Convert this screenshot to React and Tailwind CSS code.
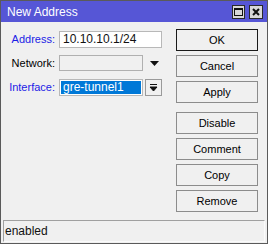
const font = { fontFamily: '"Liberation Sans", Arial, sans-serif' };

const Btn = ({ label, primary }) => (
  <button
    className={`h-[22px] w-full text-[11px] text-[#000] bg-[#f0f0f0] border ${
      primary ? 'border-[#1a1a1a]' : 'border-[#8c8c8c]'
    }`}
  >
    {label}
  </button>
);

const Row = ({ label, blue, children }) => (
  <div className="flex items-center h-[18px]">
    <span className={`w-[54px] pr-[1px] text-right text-[11px] ${blue ? 'text-[#1c1ce6]' : 'text-[#000]'}`}>
      {label}
    </span>
    <div className="ml-[3px] flex items-center gap-[2px]">{children}</div>
  </div>
);

export default function App() {
  return (
    <div className="w-[268px] h-[244px] border border-[#5a5a5a] bg-[#f0f0f0] flex flex-col" style={font}>
      <div className="h-[21px] bg-[#5656d6] flex items-center pl-[6px] pr-[4px] shrink-0">
        <span className="text-white text-[12px]">New Address</span>
        <div className="ml-auto flex gap-[4px]">
          <div className="w-[13px] h-[14px] bg-[#d8d8d8] border border-[#2a2a2a] flex items-center justify-center">
            <div className="w-[9px] h-[8px] border border-[#111] border-t-2" />
          </div>
          <div className="w-[14px] h-[14px] bg-[#d8d8d8] border border-[#2a2a2a] flex items-center justify-center">
            <svg width="8" height="8" viewBox="0 0 8 8">
              <path d="M1 1L7 7M7 1L1 7" stroke="#111" strokeWidth="2" />
            </svg>
          </div>
        </div>
      </div>

      <div className="flex flex-1 pl-[1px] pr-[9px] pt-[7px]">
        <div className="flex-1 flex flex-col gap-[6px] pt-[1px]">
          <Row label="Address:" blue>
            <div className="w-[103px] h-[17px] bg-white border border-[#b8b8b8] flex items-center px-[3px] text-[12px] text-[#111]">
              10.10.10.1/24
            </div>
          </Row>
          <Row label="Network:">
            <div className="w-[84px] h-[16px] bg-[#f0f0f0] border border-[#b0b0b0]" />
            <svg width="16" height="10" viewBox="0 0 16 10" className="ml-[3px]">
              <path d="M2 3H11L6.5 8Z" fill="#111" />
            </svg>
          </Row>
          <Row label="Interface:" blue>
            <div className="w-[84px] h-[17px] bg-white border border-[#b8b8b8] flex items-center p-[1px]">
              <div className="h-full w-full bg-[#0078d7] text-white text-[12px] flex items-center pl-[2px]">gre-tunnel1</div>
            </div>
            <div className="w-[17px] h-[17px] bg-[#f0f0f0] border border-[#9a9a9a] flex items-center justify-center">
              <svg width="9" height="9" viewBox="0 0 9 9">
                <path d="M1 1.5H8M1 4H8L4.5 8Z" stroke="#111" strokeWidth="1" fill="#111" />
              </svg>
            </div>
          </Row>
        </div>

        <div className="w-[82px] flex flex-col">
          <div className="flex flex-col gap-[4px]">
            <Btn label="OK" primary />
            <Btn label="Cancel" />
            <Btn label="Apply" />
          </div>
          <div className="flex flex-col gap-[4px] mt-[9px]">
            <Btn label="Disable" />
            <Btn label="Comment" />
            <Btn label="Copy" />
            <Btn label="Remove" />
          </div>
        </div>
      </div>

      <div className="mx-[2px] mb-[1px] h-[22px] border border-t-[#a0a0a0] border-l-[#a0a0a0] border-r-[#fafafa] border-b-[#fafafa] flex items-center pl-[1px] text-[12px] text-[#111]">
        enabled
      </div>
    </div>
  );
}
